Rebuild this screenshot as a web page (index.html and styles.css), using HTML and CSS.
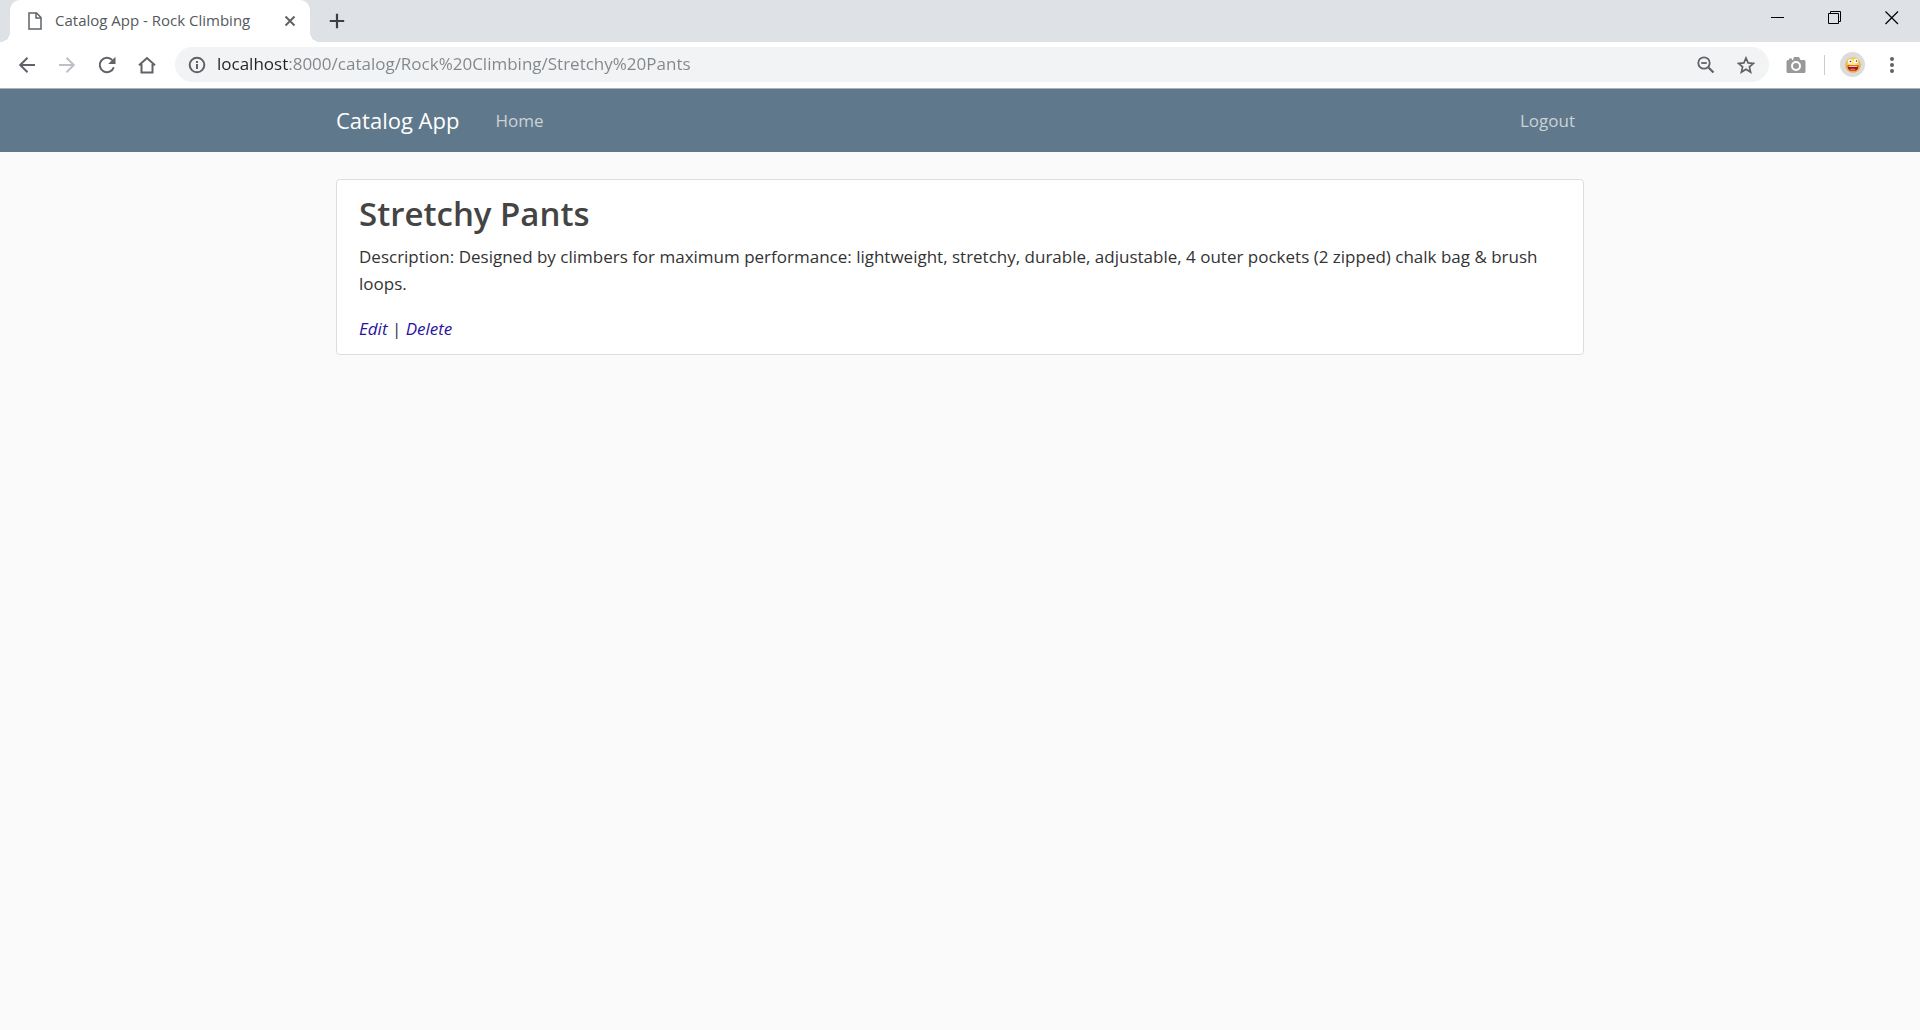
FILE: index.html
```html
<!DOCTYPE html>
<html lang="en">
<head>
<meta charset="utf-8">
<meta name="viewport" content="width=device-width, initial-scale=1">
<title>Catalog App - Rock Climbing</title>
<link rel="stylesheet" href="styles.css">
</head>
<body>
<div class="browser">
  <div class="tabstrip">
    <div class="tab">
      <svg class="tab-icon" width="14" height="18" viewBox="0 0 14 18" fill="none" stroke="#5f6368" stroke-width="1.5"><path d="M1 1h7.5L13 5.500V17H1z"/><path d="M8 1v5h5"/></svg>
      <span class="tab-title">Catalog App - Rock Climbing</span>
      <button class="icon-button tab-close" aria-label="Close tab"><svg width="12" height="12" viewBox="0 0 12 12" stroke="#5f6368" stroke-width="2"><path d="M1.500 1.500l9 9m0-9l-9 9"/></svg></button>
    </div>
    <button class="icon-button new-tab" aria-label="New tab"><svg width="16" height="16" viewBox="0 0 16 16" stroke="#3c4043" stroke-width="2.200"><path d="M8 .8v14.400M.8 8h14.400"/></svg></button>
    <div class="window-controls">
      <button class="icon-button" aria-label="Minimize"><svg width="14" height="14" viewBox="0 0 14 14"><path d="M0 6h13v1H0z"/></svg></button>
      <button class="icon-button" aria-label="Restore"><svg width="14" height="14" viewBox="0 0 14 14" fill="none" stroke="#000"><path d="M.5 2.500h10v10H.5zM2.500 2.500v-2h10v10h-2" /></svg></button>
      <button class="icon-button" aria-label="Close"><svg width="14" height="14" viewBox="0 0 14 14" stroke="#000" stroke-width="1.200"><path d="M.5.5l12.500 12.500M13 .5L.5 13"/></svg></button>
    </div>
  </div>
  <div class="toolbar">
    <div class="toolbar-nav">
      <button class="icon-button" aria-label="Back"><svg width="18" height="18" viewBox="0 0 18 18" fill="none" stroke="#5f6368" stroke-width="2"><path d="M17 9H2.500M9.500 1.700L2.200 9l7.300 7.300"/></svg></button>
      <button class="icon-button" aria-label="Forward"><svg width="18" height="18" viewBox="0 0 18 18" fill="none" stroke="#bdc1c6" stroke-width="2"><path d="M1 9h14.500M8.500 1.700L15.800 9l-7.300 7.300"/></svg></button>
      <button class="icon-button" aria-label="Reload"><svg width="18" height="18" viewBox="0 0 18 18" fill="none" stroke="#5f6368" stroke-width="2"><path d="M15.800 11.200A7.200 7.200 0 1 1 14.200 4"/><path d="M17.500.8V8h-7.300z" fill="#5f6368" stroke="none"/></svg></button>
      <button class="icon-button" aria-label="Home page"><svg width="18" height="18" viewBox="0 0 18 18" fill="none" stroke="#5f6368" stroke-width="2"><path d="M1 9.200L9 2l8 7.200M3.500 8v8.500h11V8"/></svg></button>
    </div>
    <div class="omnibox">
      <svg width="18" height="18" viewBox="0 0 18 18" fill="none" stroke="#5f6368" stroke-width="2"><circle cx="9" cy="9" r="7.300"/><path d="M9 8v5M9 5v2"/></svg>
      <input class="url" type="text" aria-label="Address" spellcheck="false" value="localhost:8000/catalog/Rock%20Climbing/Stretchy%20Pants">
      <button class="icon-button" aria-label="Zoom"><svg width="18" height="18" viewBox="0 0 18 18" fill="none" stroke="#5f6368" stroke-width="1.800"><circle cx="7" cy="7" r="5.700"/><path d="M4.200 7h5.600"/><path d="M11.500 11.500l5 5" stroke-width="2.200"/></svg></button>
      <button class="icon-button" aria-label="Bookmark this page"><svg width="18" height="18" viewBox="0 0 18 18" fill="none" stroke="#5f6368" stroke-width="1.700"><path d="M9 2l2.100 4.900 5.300.5-4 3.500 1.200 5.200L9 13.300l-4.600 2.800 1.200-5.200-4-3.500 5.300-.5z"/></svg></button>
    </div>
    <div class="toolbar-extras">
      <button class="icon-button" aria-label="Screenshot"><svg width="20" height="18" viewBox="0 0 20 18"><path d="M2 4h1V2.500h3V4h1l1-3h5l1.500 3H18q1.500 0 1.500 1.500v10Q19.500 17 18 17H2Q.5 17 .5 15.500v-10Q.5 4 2 4z" fill="#999"/><circle cx="10" cy="10" r="4" fill="none" stroke="#fff" stroke-width="2"/></svg></button>
      <span class="divider"></span>
      <button class="icon-button avatar" aria-label="Profile"><svg width="16" height="16" viewBox="0 0 16 16"><defs><radialGradient id="face" cy=".4"><stop offset=".3" stop-color="#ffe875"/><stop offset="1" stop-color="#edae3d"/></radialGradient></defs><circle cx="8" cy="8" r="7.800" fill="url(#face)"/><circle cx="5" cy="4.500" r="2.200" fill="#fff"/><circle cx="11" cy="4" r="2.200" fill="#fff"/><circle cx="5.500" cy="4.500" r=".8" fill="#333"/><circle cx="11.500" cy="4" r=".8" fill="#333"/><path d="M2.500 8.500h11Q13.500 14 8 14T2.500 8.500z" fill="#9d1515"/><path d="M3.500 9h9v1h-9z" fill="#eec9b0"/><path d="M4.500 12.500q3.500-2 6.500.3-3 2-6.500-.3z" fill="#f06078"/></svg></button>
      <button class="icon-button" aria-label="Menu"><svg width="6" height="18" viewBox="0 0 6 18" fill="#5f6368"><circle cx="3" cy="3" r="2"/><circle cx="3" cy="9" r="2"/><circle cx="3" cy="15" r="2"/></svg></button>
    </div>
  </div>
</div>
<header class="navbar">
  <nav class="container navbar-inner">
    <a class="brand" href="#">Catalog App</a>
    <a class="nav-link" href="#">Home</a>
    <a class="nav-link nav-end" href="#">Logout</a>
  </nav>
</header>
<main class="container">
  <article class="card">
    <h1>Stretchy Pants</h1>
    <p>Description: Designed by climbers for maximum performance: lightweight, stretchy, durable, adjustable, 4 outer pockets (2 zipped) chalk bag &amp; brush loops.</p>
    <p><a href="#">Edit</a> | <a href="#">Delete</a></p>
  </article>
</main>
</body>
</html>
```
FILE: styles.css
```css
* { box-sizing: border-box; }
body {
  margin: 0;
  background: #fafafa;
  color: #333;
  font: 17px/27px "Open Sans", "Noto Sans", sans-serif;
}
svg { display: block; flex: none; }
.icon-button {
  display: flex;
  align-items: center;
  justify-content: center;
  padding: 0;
  border: 0;
  background: none;
}

/* Browser frame */
.browser { border-bottom: 1px solid #b0b0b0; }
.tabstrip {
  display: flex;
  height: 42px;
  padding-left: 10px;
  background: #dee1e6;
}
.tab {
  position: relative;
  display: flex;
  align-items: center;
  width: 300px;
  padding: 0 14px 0 18px;
  border-radius: 10px 10px 0 0;
  background: #fff;
}
.tab::before,
.tab::after {
  content: "";
  position: absolute;
  bottom: 0;
  width: 10px;
  height: 10px;
}
.tab::before { right: 100%; background: radial-gradient(circle at 0 0, transparent 10px, #fff 10px); }
.tab::after { left: 100%; background: radial-gradient(circle at 100% 0, transparent 10px, #fff 10px); }
.tab-title {
  flex: 1;
  margin-left: 13px;
  padding-bottom: 2px;
  color: #55595d;
  font-size: 15px;
  white-space: nowrap;
}
.new-tab { width: 54px; }
.window-controls { display: flex; height: 36px; margin-left: auto; }
.window-controls .icon-button { width: 57px; }
.toolbar {
  display: flex;
  align-items: center;
  height: 46px;
  padding-bottom: 1px;
  background: #fff;
}
.toolbar-nav { display: flex; padding: 0 8px 0 7px; }
.toolbar-nav .icon-button { width: 40px; height: 36px; }
.omnibox {
  display: flex;
  flex: 1;
  align-items: center;
  height: 35px;
  padding: 0 3px 0 13px;
  border-radius: 18px;
  background: #f1f3f4;
}
.omnibox .icon-button { width: 40px; height: 35px; }
.url {
  flex: 1;
  min-width: 0;
  padding: 0 0 2px;
  margin-left: 11px;
  border: 0;
  outline: 0;
  background: linear-gradient(90deg, #202124 72px, #80868b 72px);
  background-clip: text;
  color: transparent;
  font: 17px/27px "Open Sans", "Noto Sans", sans-serif;
}
.toolbar-extras { display: flex; align-items: center; padding: 0 13px 0 17px; }
.divider { width: 1px; height: 20px; margin: 0 15px 0 18px; background: #ccc; }
.avatar {
  width: 25px;
  height: 25px;
  margin-right: 12px;
  border-radius: 50%;
  background: #dcdcdc;
}
.toolbar-extras .icon-button:last-child { width: 30px; height: 30px; }

/* Page */
.container { width: 65%; margin: 0 auto; }
.navbar { background: #60788b; }
.navbar-inner { display: flex; align-items: center; height: 63px; }
.brand { margin-right: 27px; color: #fff; font-size: 22px; text-decoration: none; }
.nav-link { padding: 0 9px; color: #cbd2d8; text-decoration: none; }
.nav-end { margin-left: auto; }
.card {
  margin-top: 27px;
  padding: 13px 22px 12px;
  border: 1px solid #ddd;
  border-radius: 4px;
  background: #fff;
}
.card h1 {
  margin: 0 0 8px;
  color: #444;
  font-size: 33px;
  font-weight: 600;
  line-height: 42px;
}
.card p { margin: 0 0 18px; }
.card p:last-child { margin: 0; }
.card a { color: #2a13a0; font-style: italic; text-decoration: none; }
```
